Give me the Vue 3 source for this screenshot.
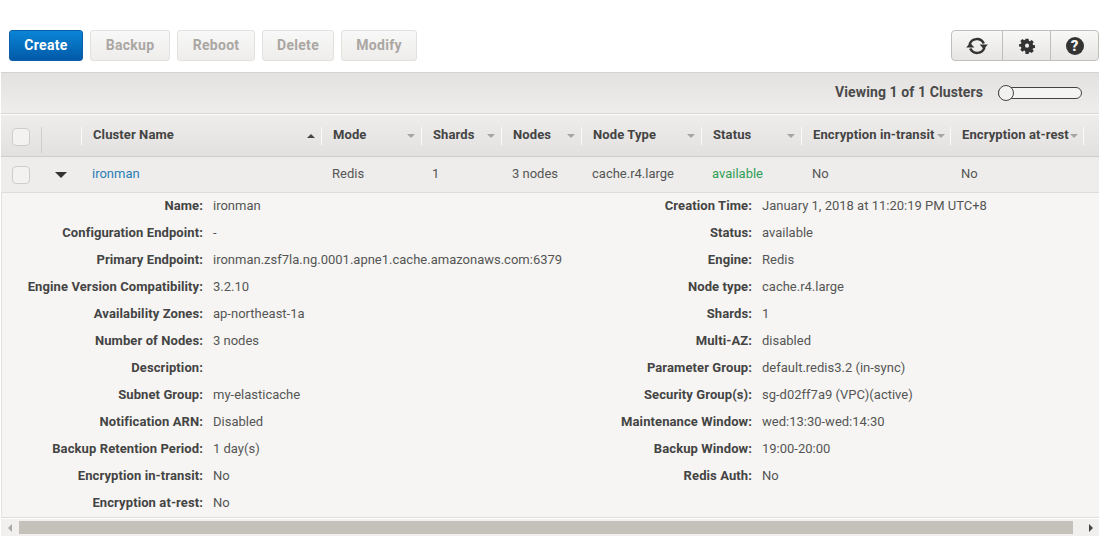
<script setup>
const cols = [
  { name: 'Cluster Name', w: 240, sort: 'up' },
  { name: 'Mode', w: 100 },
  { name: 'Shards', w: 80 },
  { name: 'Nodes', w: 80 },
  { name: 'Node Type', w: 120 },
  { name: 'Status', w: 100 },
  { name: 'Encryption in-transit', w: 149, tight: true },
  { name: 'Encryption at-rest', w: 133, tight: true },
]
const cells = [
  { t: 'ironman', w: 240, cls: 'link' },
  { t: 'Redis', w: 100 },
  { t: '1', w: 80 },
  { t: '3 nodes', w: 80 },
  { t: 'cache.r4.large', w: 120 },
  { t: 'available', w: 100, cls: 'ok' },
  { t: 'No', w: 149 },
  { t: 'No', w: 133 },
]
const left = [
  ['Name:', 'ironman'],
  ['Configuration Endpoint:', '-'],
  ['Primary Endpoint:', 'ironman.zsf7la.ng.0001.apne1.cache.amazonaws.com:6379'],
  ['Engine Version Compatibility:', '3.2.10'],
  ['Availability Zones:', 'ap-northeast-1a'],
  ['Number of Nodes:', '3 nodes'],
  ['Description:', ''],
  ['Subnet Group:', 'my-elasticache'],
  ['Notification ARN:', 'Disabled'],
  ['Backup Retention Period:', '1 day(s)'],
  ['Encryption in-transit:', 'No'],
  ['Encryption at-rest:', 'No'],
]
const right = [
  ['Creation Time:', 'January 1, 2018 at 11:20:19 PM UTC+8'],
  ['Status:', 'available'],
  ['Engine:', 'Redis'],
  ['Node type:', 'cache.r4.large'],
  ['Shards:', '1'],
  ['Multi-AZ:', 'disabled'],
  ['Parameter Group:', 'default.redis3.2 (in-sync)'],
  ['Security Group(s):', 'sg-d02ff7a9 (VPC)(active)'],
  ['Maintenance Window:', 'wed:13:30-wed:14:30'],
  ['Backup Window:', '19:00-20:00'],
  ['Redis Auth:', 'No'],
]
</script>

<template>
  <div class="page">
    <div class="toolbar">
      <div class="actions">
        <button class="btn primary">Create</button>
        <button class="btn off w80">Backup</button>
        <button class="btn off w78">Reboot</button>
        <button class="btn off w72">Delete</button>
        <button class="btn off w76">Modify</button>
      </div>
      <div class="tools">
        <button class="tool t1" aria-label="Refresh">
          <svg width="22" height="20" viewBox="0 0 22 20">
            <path d="M3.500 8.500A7.700 7.700 0 0 1 17.800 7.500" fill="none" stroke="#333" stroke-width="2.500"/>
            <path d="M13.700 8.500h8.100l-4 4.800z" fill="#333"/>
            <path d="M18.500 11.500A7.700 7.700 0 0 1 4.200 12.500" fill="none" stroke="#333" stroke-width="2.500"/>
            <path d="M8.300 11.500H.2l4-4.800z" fill="#333"/>
          </svg>
        </button>
        <button class="tool t2" aria-label="Settings">
          <svg width="16" height="16" viewBox="0 0 16 16">
            <path fill="#333" fill-rule="evenodd" d="M6.400.6h3.200l.4 2.100 1.200.5 1.800-1.200 2.200 2.200-1.200 1.800.5 1.200 2.100.4v2.800l-2.100.4-.5 1.200 1.200 1.800-2.200 2.200-1.800-1.200-1.200.5-.4 2.100H6.400L6 13.800l-1.200-.5-1.800 1.200L.8 12.300 2 10.500l-.5-1.200-2.100-.4V6.500l2.100-.4L2 4.900.8 3.100 3 .9l1.800 1.200L6 1.600zM8 5.800a2.200 2.200 0 1 0 0 4.400 2.200 2.200 0 0 0 0-4.400z" transform="translate(0.600 0.200) scale(.93)"/>
          </svg>
        </button>
        <button class="tool t3" aria-label="Help">
          <span class="help">?</span>
        </button>
      </div>
    </div>

    <div class="panel">
      <div class="viewbar">
        <span class="viewing">Viewing 1 of 1 Clusters</span>
        <span class="slider"><span class="knob"></span></span>
      </div>

      <div class="thead">
        <div class="hcell first"><span class="check"></span></div>
        <div class="hcell second"></div>
        <div
          v-for="c in cols"
          :key="c.name"
          class="hcell named"
          :class="{ tight: c.tight }"
          :style="{ width: c.w + 'px' }"
        >
          <span class="hname">{{ c.name }}</span>
          <span class="caret" :class="c.sort"></span>
        </div>
      </div>

      <div class="trow">
        <div class="rcell w40"><span class="check"></span></div>
        <div class="rcell w40 center"><span class="expand"></span></div>
        <div
          v-for="(c, i) in cells"
          :key="i"
          class="rcell val"
          :class="c.cls"
          :style="{ width: c.w + 'px' }"
        >{{ c.t }}</div>
      </div>

      <div class="detail">
        <div class="dcol dleft">
          <div v-for="r in left" :key="r[0]" class="drow">
            <span class="dlabel">{{ r[0] }}</span>
            <span class="dval">{{ r[1] }}</span>
          </div>
        </div>
        <div class="dcol dright">
          <div v-for="r in right" :key="r[0]" class="drow">
            <span class="dlabel">{{ r[0] }}</span>
            <span class="dval">{{ r[1] }}</span>
          </div>
        </div>
      </div>

      <div class="scrollbar">
        <span class="arrow-l"></span>
        <span class="thumb"></span>
        <span class="arrow-r"></span>
      </div>
    </div>
  </div>
</template>

<style>
html, body { margin: 0; background: #fff; }
</style>

<style scoped>
.page {
  width: 1115px;
  height: 536px;
  overflow: hidden;
  font-family: Roboto, "Liberation Sans", sans-serif;
  font-size: 13px;
  color: #444;
  box-sizing: border-box;
  padding-top: 30px;
}
.toolbar {
  display: flex;
  justify-content: space-between;
  width: 1099px;
  padding-left: 9px;
  box-sizing: border-box;
  height: 42px;
}
.actions { display: flex; gap: 7px; height: 31px; }
.btn {
  font: 700 14px Roboto, "Liberation Sans", sans-serif;
  letter-spacing: .3px;
  height: 31px;
  border-radius: 3px;
  padding: 0 0 2px;
  box-sizing: border-box;
}
.primary {
  width: 74px;
  color: #fff;
  border: 1px solid #0b5ea8;
  background: linear-gradient(#0a85d6, #0259a8);
}
.off {
  color: #aaa7a3;
  border: 1px solid #e2e1de;
  background: linear-gradient(#f8f8f8, #eeedeb);
}
.w80 { width: 80px; }
.w78 { width: 78px; }
.w72 { width: 72px; }
.w76 { width: 76px; }
.tools {
  display: flex;
  height: 31px;
  width: 148px;
  box-sizing: border-box;
  border: 1px solid #c1bfbb;
  border-radius: 4px;
  background: linear-gradient(#f8f8f7, #e6e5e3);
}
.tool {
  border: 0;
  background: none;
  padding: 0;
  display: flex;
  align-items: center;
  justify-content: center;
  height: 29px;
}
.t1 { width: 51px; border-right: 1px solid #c1bfbb; padding-top: 1px; }
.t2 { width: 48px; border-right: 1px solid #c1bfbb; }
.t3 { flex: 1; }
.help {
  width: 18px;
  height: 18px;
  border-radius: 50%;
  background: #333;
  color: #f2f2f1;
  font: 900 15px/18px Roboto, sans-serif;
  text-align: center;
}
.panel {
  width: 1098px;
  margin-left: 1px;
  border-top: 1px solid #d5d3cf;
}
.viewbar {
  height: 40px;
  display: flex;
  align-items: center;
  justify-content: flex-end;
  gap: 15px;
  padding-right: 17px;
  background: linear-gradient(#e3e2e0, #eeedeb);
  border-bottom: 1px solid #d8d6d3;
  box-sizing: content-box;
}
.viewing { font-weight: 700; font-size: 14px; letter-spacing: .1px; color: #4a4a4a; padding-bottom: 2px; }
.slider {
  width: 84px;
  height: 12px;
  box-sizing: border-box;
  border: 1px solid #444;
  border-radius: 6px;
  background: #f4f4f3;
  position: relative;
}
.knob {
  position: absolute;
  left: -1px;
  top: -3px;
  width: 14px;
  height: 14px;
  border-radius: 50%;
  border: 1px solid #444;
  background: #f2f2f1;
}
.thead {
  margin-top: 1px;
  height: 41px;
  padding-left: 1px;
  box-sizing: content-box;
  display: flex;
  align-items: center;
  background: linear-gradient(#eeedeb, #e2e1df);
  border-bottom: 1px solid #cfcdc9;
}
.hcell {
  height: 18px;
  display: flex;
  align-items: center;
  border-right: 1px solid #fafaf9;
  box-sizing: border-box;
  flex: none;
  font-weight: 700;
  letter-spacing: .1px;
  color: #444;
}
.first {
  width: 40px;
  height: 26px;
  align-self: flex-start;
  align-items: flex-start;
  margin-top: 12px;
  padding: 1px 0 0 10px;
  border-right-color: #cfcdc9;
}
.second { width: 40px; }
.named { padding: 0 6px 0 11px; justify-content: space-between; }
.hname { padding-bottom: 2px; }
.tight { padding-right: 5px; }
.w40 { width: 40px; flex: none; }
.caret {
  width: 0;
  height: 0;
  border: 4px solid transparent;
  border-top: 4px solid #a7a5a2;
  border-bottom: 0;
  flex: none;
}
.caret.up {
  border-top: 0;
  border-bottom: 4px solid #444;
}
.check {
  width: 18px;
  height: 18px;
  box-sizing: border-box;
  border: 1px solid #cfcdc9;
  border-radius: 4px;
  background: #f3f2f1;
  display: block;
}
.trow {
  height: 35px;
  display: flex;
  align-items: center;
  background: #eeedeb;
  border-bottom: 1px solid #dedcd9;
}
.rcell { flex: none; box-sizing: border-box; display: flex; align-items: center; justify-content: center; }
.center { padding-top: 1px; }
.val { justify-content: flex-start; padding: 0 0 2px 11px; color: #555; }
.link { color: #2a7db5; }
.ok { color: #2f9e55; }
.expand {
  width: 0;
  height: 0;
  border: 6px solid transparent;
  border-top: 6px solid #333;
  border-bottom: 0;
  display: block;
}
.detail {
  height: 325px;
  background: #f6f5f3;
  display: flex;
  border-left: 1px solid #e4e2df;
  border-bottom: 1px solid #dedcd9;
  box-sizing: border-box;
}
.dcol { display: flex; flex-direction: column; }
.dleft { width: 549px; }
.dright { flex: 1; }
.drow { display: flex; height: 27px; box-sizing: border-box; padding-bottom: 2px; align-items: center; flex: none; }
.dlabel {
  width: 211px;
  text-align: right;
  font-weight: 700;
  letter-spacing: .1px;
  color: #444;
  flex: none;
  padding-right: 10px;
  box-sizing: border-box;
}
.dval { color: #555; }
.scrollbar {
  margin-top: 1px;
  height: 17px;
  display: flex;
  align-items: center;
  background: #f1f0ee;
  box-sizing: border-box;
}
.arrow-l, .arrow-r {
  width: 0;
  height: 0;
  border: 4px solid transparent;
  flex: none;
}
.arrow-l { border-right: 4px solid #aaa; border-left: 0; margin-left: 7px; }
.arrow-r { border-left: 4px solid #444; border-right: 0; margin-left: 16px; }
.thumb { width: 1054px; height: 13px; background: #c4c1ba; margin-left: 7px; }
</style>
